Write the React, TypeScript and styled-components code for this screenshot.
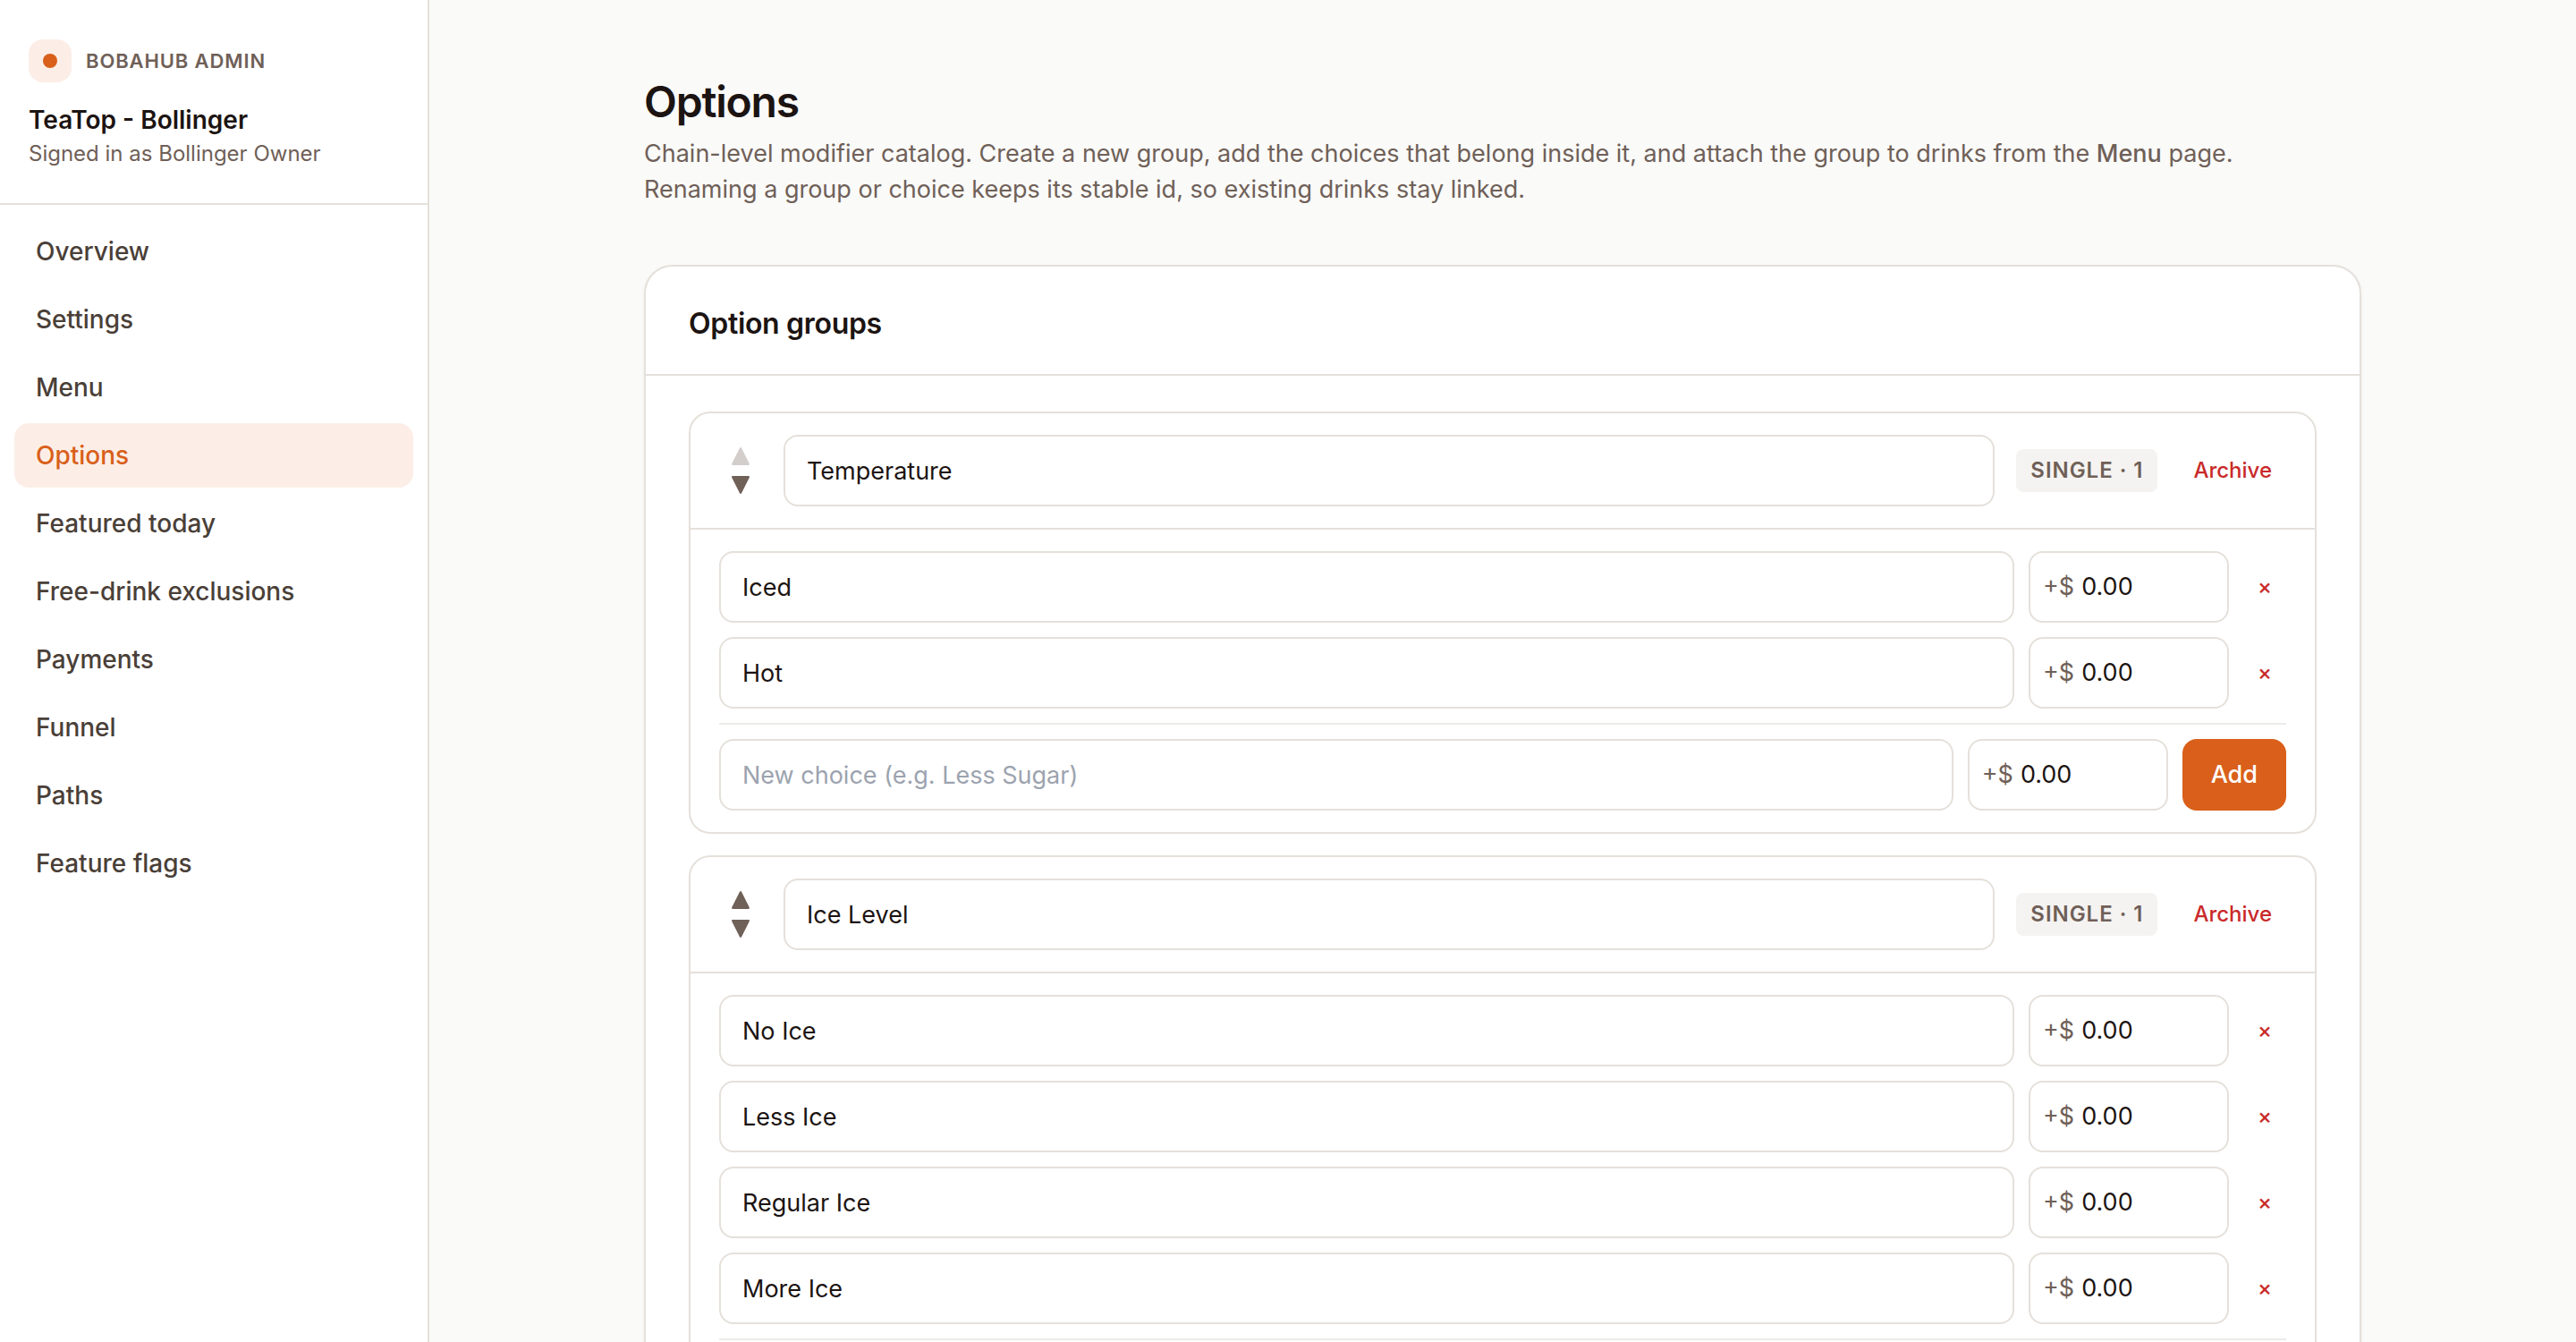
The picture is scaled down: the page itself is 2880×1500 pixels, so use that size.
import React from "react";
import styled, { createGlobalStyle, css } from "styled-components";

const color = {
  page: "#fafaf8",
  surface: "#ffffff",
  line: "#e5e0da",
  lineSoft: "#edebe8",
  chip: "#f5f3f1",
  ink: "#1c1412",
  nav: "#4a3f38",
  muted: "#6f6058",
  placeholder: "#9ca3af",
  accent: "#d95f1a",
  accentSoft: "#fceee7",
  danger: "#c92a2a",
};

const GlobalStyle = createGlobalStyle`
  *, *::before, *::after { box-sizing: border-box; }
  body {
    margin: 0;
    background: ${color.page};
    color: ${color.ink};
    font-family: Inter, "Liberation Sans", sans-serif;
    font-size: 27px;
    line-height: 40px;
    -webkit-font-smoothing: antialiased;
  }
  button, input { font: inherit; color: inherit; }
  h1, h2, p { margin: 0; }
`;

const Shell = styled.div`
  display: flex;
  height: 100vh;
  overflow: hidden;
`;

const Sidebar = styled.aside`
  flex: none;
  width: 480px;
  background: ${color.surface};
  border-right: 2px solid ${color.line};
`;

const Account = styled.header`
  padding: 44px 32px 39px;
  border-bottom: 2px solid ${color.line};
`;

const Brand = styled.div`
  display: flex;
  align-items: center;
  gap: 16px;
  margin-bottom: 22px;
  font-size: 22px;
  font-weight: 600;
  letter-spacing: 0.04em;
  text-transform: uppercase;
  color: ${color.muted};
`;

const BrandMark = styled.span`
  display: grid;
  place-items: center;
  width: 48px;
  height: 48px;
  border-radius: 16px;
  background: ${color.accentSoft};

  &::after {
    content: "";
    width: 16px;
    height: 16px;
    border-radius: 50%;
    background: ${color.accent};
  }
`;

const StoreName = styled.p`
  font-size: 28px;
  font-weight: 600;
`;

const SignedIn = styled.p`
  margin-top: 2px;
  font-size: 24px;
  line-height: 32px;
  color: ${color.muted};
`;

const Nav = styled.nav`
  display: flex;
  flex-direction: column;
  gap: 4px;
  padding: 16px;
`;

const NavLink = styled.a<{ $active: boolean }>`
  padding: 16px 24px;
  border-radius: 16px;
  font-size: 28px;
  font-weight: 500;
  text-decoration: none;
  color: ${(p) => (p.$active ? color.accent : color.nav)};
  background: ${(p) => (p.$active ? color.accentSoft : "transparent")};
`;

const Main = styled.main`
  flex: 1;
  min-width: 0;
  overflow: hidden;
`;

const Content = styled.div`
  max-width: 2048px;
  margin: 0 auto;
  padding: 80px 64px;
`;

const Title = styled.h1`
  font-size: 48px;
  line-height: 68px;
  font-weight: 600;
  letter-spacing: -0.025em;
`;

const Intro = styled.p`
  max-width: 1840px;
  margin-top: 4px;
  color: ${color.muted};

  strong { font-weight: 500; }
`;

const Card = styled.section`
  margin-top: 64px;
  border: 2px solid ${color.line};
  border-radius: 32px;
  background: ${color.surface};
  box-shadow: 0 2px 4px rgba(28, 20, 18, 0.05);
`;

const CardHead = styled.div`
  padding: 48px 48px 40px;
  border-bottom: 2px solid ${color.line};
`;

const CardTitle = styled.h2`
  font-size: 32px;
  line-height: 32px;
  font-weight: 600;
  letter-spacing: -0.01em;
`;

const GroupList = styled.div`
  display: flex;
  flex-direction: column;
  gap: 24px;
  padding: 40px 48px;
`;

const Group = styled.article`
  border: 2px solid ${color.line};
  border-radius: 24px;
`;

const GroupHead = styled.div`
  display: flex;
  align-items: center;
  gap: 24px;
  padding: 24px 32px;
  border-bottom: 2px solid ${color.line};
`;

const Mover = styled.div`
  display: flex;
  flex-direction: column;
`;

const MoveButton = styled.button`
  display: grid;
  place-items: center;
  width: 48px;
  height: 32px;
  padding: 0;
  border: 0;
  background: none;
  color: ${color.muted};

  &:disabled { opacity: 0.3; }
`;

const field = css`
  height: 80px;
  border: 2px solid ${color.line};
  border-radius: 16px;
  background: ${color.surface};
`;

const TextField = styled.input`
  ${field}
  flex: 1;
  min-width: 0;
  padding: 0 24px;

  &::placeholder { color: ${color.placeholder}; opacity: 1; }
`;

const PriceBox = styled.label`
  ${field}
  flex: none;
  display: flex;
  align-items: center;
  gap: 8px;
  width: 224px;
  padding: 0 14px;
  color: ${color.muted};
`;

const PriceInput = styled.input`
  flex: 1;
  min-width: 0;
  padding: 0;
  border: 0;
  outline: 0;
  background: none;
  color: ${color.ink};
`;

const Chip = styled.span`
  padding: 8px 16px;
  border-radius: 8px;
  background: ${color.chip};
  font-size: 24px;
  line-height: 32px;
  font-weight: 600;
  letter-spacing: 0.04em;
  text-transform: uppercase;
  white-space: nowrap;
  color: ${color.muted};
`;

const DangerButton = styled.button`
  padding: 8px 16px;
  border: 0;
  border-radius: 8px;
  background: none;
  font-size: 24px;
  line-height: 32px;
  font-weight: 500;
  color: ${color.danger};
`;

const GroupBody = styled.div`
  display: flex;
  flex-direction: column;
  gap: 16px;
  padding: 24px 32px;
`;

const Row = styled.div`
  display: flex;
  align-items: center;
  gap: 16px;
`;

const AddRow = styled(Row).attrs({ as: "form" })`
  padding-top: 16px;
  border-top: 2px solid ${color.lineSoft};
`;

const AddButton = styled.button`
  height: 80px;
  padding: 0 32px;
  border: 0;
  border-radius: 16px;
  background: ${color.accent};
  font-weight: 500;
  color: #ffffff;
`;

const navItems = [
  "Overview",
  "Settings",
  "Menu",
  "Options",
  "Featured today",
  "Free-drink exclusions",
  "Payments",
  "Funnel",
  "Paths",
  "Feature flags",
];

const groups = [
  { name: "Temperature", rule: "Single · 1", choices: ["Iced", "Hot"] },
  {
    name: "Ice Level",
    rule: "Single · 1",
    choices: ["No Ice", "Less Ice", "Regular Ice", "More Ice"],
  },
];

function Triangle({ down = false }: { down?: boolean }) {
  return (
    <svg width="20" height="20" viewBox="0 0 20 20" fill="currentColor" aria-hidden="true">
      <path
        d={
          down
            ? "M1.2 0h17.6c.9 0 1.4.9 1 1.7L11 19.3c-.4.9-1.6.9-2 0L.2 1.7C-.2.9.3 0 1.2 0z"
            : "M1.2 20h17.6c.9 0 1.4-.9 1-1.7L11 .7c-.4-.9-1.6-.9-2 0L.2 18.3c-.4.8.1 1.7 1 1.7z"
        }
      />
    </svg>
  );
}

function Price({ label }: { label: string }) {
  return (
    <PriceBox>
      <span>+$</span>
      <PriceInput aria-label={label} inputMode="decimal" defaultValue="0.00" />
    </PriceBox>
  );
}

export default function App() {
  return (
    <>
      <GlobalStyle />
      <Shell>
        <Sidebar>
          <Account>
            <Brand>
              <BrandMark />
              BobaHub Admin
            </Brand>
            <StoreName>TeaTop - Bollinger</StoreName>
            <SignedIn>Signed in as Bollinger Owner</SignedIn>
          </Account>
          <Nav>
            {navItems.map((item) => (
              <NavLink
                key={item}
                href="#"
                $active={item === "Options"}
                aria-current={item === "Options" ? "page" : undefined}
              >
                {item}
              </NavLink>
            ))}
          </Nav>
        </Sidebar>
        <Main>
          <Content>
            <Title>Options</Title>
            <Intro>
              Chain-level modifier catalog. Create a new group, add the choices that belong inside
              it, and attach the group to drinks from the <strong>Menu</strong> page. Renaming a
              group or choice keeps its stable id, so existing drinks stay linked.
            </Intro>
            <Card>
              <CardHead>
                <CardTitle>Option groups</CardTitle>
              </CardHead>
              <GroupList>
                {groups.map((group, index) => (
                  <Group key={group.name}>
                    <GroupHead>
                      <Mover>
                        <MoveButton aria-label="Move up" disabled={index === 0}>
                          <Triangle />
                        </MoveButton>
                        <MoveButton aria-label="Move down">
                          <Triangle down />
                        </MoveButton>
                      </Mover>
                      <TextField aria-label="Group name" defaultValue={group.name} />
                      <Chip>{group.rule}</Chip>
                      <DangerButton>Archive</DangerButton>
                    </GroupHead>
                    <GroupBody>
                      {group.choices.map((choice) => (
                        <Row key={choice}>
                          <TextField aria-label="Choice name" defaultValue={choice} />
                          <Price label={`${choice} price`} />
                          <DangerButton aria-label={`Remove ${choice}`}>×</DangerButton>
                        </Row>
                      ))}
                      <AddRow>
                        <TextField
                          aria-label="New choice"
                          placeholder="New choice (e.g. Less Sugar)"
                        />
                        <Price label="New choice price" />
                        <AddButton type="button">Add</AddButton>
                      </AddRow>
                    </GroupBody>
                  </Group>
                ))}
              </GroupList>
            </Card>
          </Content>
        </Main>
      </Shell>
    </>
  );
}
